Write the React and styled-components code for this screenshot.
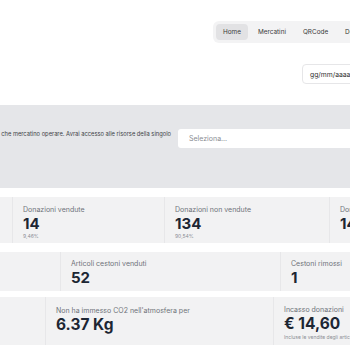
import React from "react";
import styled, { createGlobalStyle } from "styled-components";

const Global = createGlobalStyle`
  html, body { margin: 0; padding: 0; background: #ffffff; }
  body { font-family: Inter, "Noto Sans", "Liberation Sans", sans-serif; overflow: hidden; width: 350px; height: 350px; }
  #root { width: 350px; height: 350px; overflow: hidden; }
`;

const Page = styled.div`
  width: 350px;
  display: flex;
  flex-direction: column;
`;

const Header = styled.div`
  display: flex;
  padding: 21px 0 0 213px;
`;

const NavPill = styled.nav`
  display: flex;
  gap: 3px;
  padding: 3px;
  background: #f3f3f4;
  border-radius: 6px;
  flex-shrink: 0;
  width: 200px;
`;

const NavButton = styled.div`
  height: 16px;
  padding: 0 7px;
  display: flex;
  align-items: center;
  font-size: 6.4px;
  color: #3a3a3a;
  border-radius: 4px;
  background: ${(p) => (p.$active ? "#e2e2e4" : "transparent")};
  white-space: nowrap;
`;

const DateRow = styled.div`
  display: flex;
  padding: 21px 0 0 302px;
`;

const DateInput = styled.div`
  height: 20px;
  width: 80px;
  flex-shrink: 0;
  box-sizing: border-box;
  border: 1px solid #e6e6e8;
  border-radius: 4px;
  display: flex;
  align-items: center;
  padding-left: 7px;
  font-size: 6.8px;
  color: #333;
`;

const Band = styled.section`
  margin-top: 21px;
  height: 83px;
  background: #e5e6e9;
  display: flex;
  align-items: flex-start;
  padding-top: 24px;
  box-sizing: border-box;
`;

const Intro = styled.div`
  width: 171px;
  flex-shrink: 0;
  display: flex;
  justify-content: flex-end;
  font-size: 5.75px;
  line-height: 10px;
  color: #3c3f45;
  white-space: nowrap;
`;

const Select = styled.div`
  margin-left: 7px;
  width: 200px;
  flex-shrink: 0;
  height: 19px;
  background: #ffffff;
  border-radius: 3px;
  display: flex;
  align-items: center;
  padding-left: 11px;
  font-size: 7px;
  color: #8a8d93;
`;

const Stats = styled.div`
  display: flex;
  flex-direction: column;
`;

const Row = styled.div`
  display: flex;
  height: ${(p) => p.$h}px;
  margin-top: ${(p) => p.$mt}px;
`;

const Card = styled.div`
  flex-shrink: 0;
  width: ${(p) => p.$w}px;
  box-sizing: border-box;
  background: #f2f2f3;
  border-left: ${(p) => (p.$first ? "none" : "1px solid #e7e7e9")};
  padding: ${(p) => p.$pt ?? 5}px 0 0 10px;
  display: flex;
  flex-direction: column;
  overflow: hidden;
`;

const Label = styled.div`
  font-size: 7px;
  line-height: 10px;
  color: #6f737a;
  white-space: nowrap;
`;

const Value = styled.div`
  font-size: ${(p) => p.$size || 15}px;
  line-height: ${(p) => (p.$size || 15) + 3}px;
  font-weight: 700;
  color: #1d2633;
  white-space: nowrap;
`;

const Sub = styled.div`
  font-size: 5px;
  line-height: 7px;
  color: #8a8d93;
  white-space: nowrap;
`;

export default function App() {
  return (
    <Page>
      <Global />
      <Header>
        <NavPill>
          <NavButton $active>Home</NavButton>
          <NavButton>Mercatini</NavButton>
          <NavButton>QRCode</NavButton>
          <NavButton>Donazioni</NavButton>
        </NavPill>
      </Header>
      <DateRow>
        <DateInput>gg/mm/aaaa</DateInput>
      </DateRow>
      <Band>
        <Intro>
          <span>Scegli in che mercatino operare. Avrai accesso alle risorse della singolo</span>
        </Intro>
        <Select>Seleziona...</Select>
      </Band>
      <Stats>
        <Row $h={46} $mt={9}>
          <Card $w={12} $first />
          <Card $w={152} $pt={8}>
            <Label>Donazioni vendute</Label>
            <Value>14</Value>
            <Sub>9,46%</Sub>
          </Card>
          <Card $w={165} $pt={8}>
            <Label>Donazioni non vendute</Label>
            <Value>134</Value>
            <Sub>90,54%</Sub>
          </Card>
          <Card $w={120} $pt={8}>
            <Label>Donazioni totali</Label>
            <Value>148</Value>
          </Card>
        </Row>
        <Row $h={39} $mt={9}>
          <Card $w={60} $first />
          <Card $w={220} $pt={7}>
            <Label>Articoli cestoni venduti</Label>
            <Value>52</Value>
          </Card>
          <Card $w={120} $pt={7}>
            <Label>Cestoni rimossi</Label>
            <Value>1</Value>
          </Card>
        </Row>
        <Row $h={48} $mt={6}>
          <Card $w={45} $first />
          <Card $w={228} $pt={9}>
            <Label>Non ha immesso CO2 nell'atmosfera per</Label>
            <Value $size={15.5}>6.37 Kg</Value>
          </Card>
          <Card $w={120} $pt={8}>
            <Label>Incasso donazioni</Label>
            <Value $size={15.5}>€ 14,60</Value>
            <Sub>Incluse le vendite degli articoli</Sub>
          </Card>
        </Row>
      </Stats>
    </Page>
  );
}
